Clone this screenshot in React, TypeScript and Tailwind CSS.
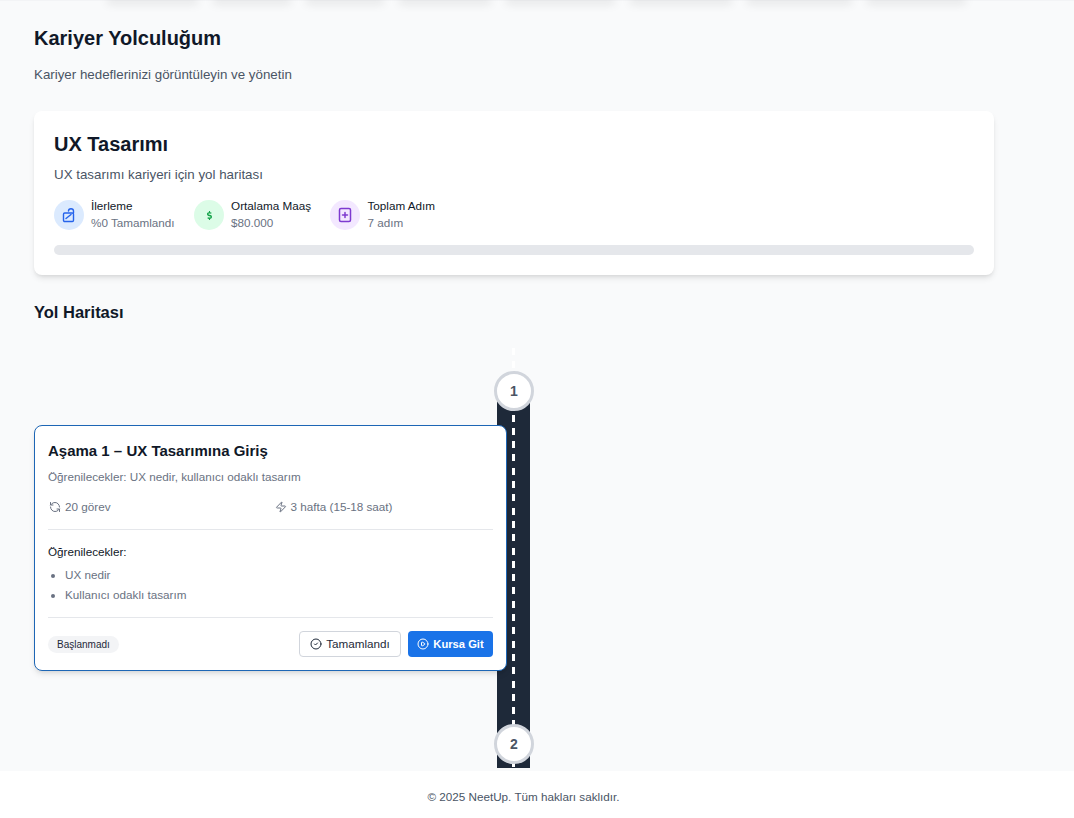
import { CircleCheck, CirclePlay, RefreshCcw, Zap } from "lucide-react";
import { FaDollarSign } from "react-icons/fa";

const navShadows = ["w-[85px]", "w-[72px]", "w-[72px]", "w-[86px]", "w-[103px]", "w-[96px]", "w-[99px]", "w-[93px]"];

function ProgressIcon() {
  return (
    <svg width="14" height="16" viewBox="0 0 14 16" fill="none" stroke="currentColor" strokeWidth="1.4" strokeLinecap="round" strokeLinejoin="round" className="text-[#2563eb]">
      <rect x="1.5" y="6" width="10" height="8.5" rx="1.2" />
      <path d="M4 11.5 L9 7.5" />
      <path d="M6.5 4 C6.5 1 11.5 1 11.5 4 L11.5 6" />
    </svg>
  );
}

function StepsIcon() {
  return (
    <svg width="14" height="16" viewBox="0 0 14 16" fill="none" stroke="currentColor" strokeWidth="1.5" strokeLinecap="round" strokeLinejoin="round" className="text-[#7e3ad0]">
      <rect x="1.5" y="1.5" width="11" height="13" rx="1.5" />
      <path d="M7 5.5 V10.5 M4.5 8 H9.5" />
    </svg>
  );
}

const stats = [
  { icon: <ProgressIcon />, bg: "bg-[#dbeafe]", label: "İlerleme", value: "%0 Tamamlandı" },
  { icon: <FaDollarSign size={9} className="text-[#16a34a]" />, bg: "bg-[#dcfce7]", label: "Ortalama Maaş", value: "$80.000" },
  { icon: <StepsIcon />, bg: "bg-[#f3e8ff]", label: "Toplam Adım", value: "7 adım" },
];

function RoadNode({ n }: { n: number }) {
  return (
    <div className="w-10 h-10 rounded-full bg-white border-[3px] border-gray-300 flex items-center justify-center text-sm font-bold text-gray-600">
      {n}
    </div>
  );
}

export default function App() {
  return (
    <div className="h-[818px] overflow-hidden bg-gray-50 flex flex-col font-['Liberation_Sans',Arial,sans-serif]">
      {/* NAV, scrolled out of view */}
      <div className="h-0 flex gap-[21px] pl-[110px] border-t border-gray-100">
        {navShadows.map((w, i) => (
          <div key={i} className={`${w} h-0 shadow-[0_0_10px_3px_rgba(0,0,0,0.1)]`} />
        ))}
      </div>

      <main className="flex-1 min-h-0 overflow-hidden px-[34px]">
        {/* HEADER */}
        <h1 className="mt-[23px] text-[20px] leading-[28px] font-bold text-gray-900">Kariyer Yolculuğum</h1>
        <p className="mt-[14px] text-[13.33px] leading-[18px] text-gray-600">Kariyer hedeflerinizi görüntüleyin ve yönetin</p>

        {/* CAREER CARD */}
        <section className="mt-[27px] w-[960px] h-[164px] bg-white rounded-lg shadow-md px-5 pt-[19px]">
          <h2 className="text-[20px] leading-[28px] font-bold text-gray-900">UX Tasarımı</h2>
          <p className="mt-[8px] text-[13.33px] leading-[18px] text-gray-600">UX tasarımı kariyeri için yol haritası</p>
          <div className="mt-[13px] flex gap-[19.5px]">
            {stats.map((s) => (
              <div key={s.label} className="flex items-center gap-[7px]">
                <div className={`w-[30px] h-[30px] rounded-full flex items-center justify-center ${s.bg}`}>{s.icon}</div>
                <div className="pb-[2px]">
                  <div className="text-[11.7px] leading-[17px] text-gray-900">{s.label}</div>
                  <div className="text-[11.7px] leading-[17px] text-gray-500">{s.value}</div>
                </div>
              </div>
            ))}
          </div>
          <div className="mt-[12px] h-[10px] rounded-full bg-gray-200" />
        </section>

        <h2 className="mt-[27px] text-[16.5px] leading-[20px] font-bold text-gray-900">Yol Haritası</h2>

        {/* ROADMAP */}
        <div className="relative mt-[29px] h-[417px]">
          <div className="absolute left-[463px] top-[43px] bottom-0 w-[33px] bg-gray-800" />
          <div className="absolute left-[478px] top-[-3px] bottom-0 w-[3px] bg-[repeating-linear-gradient(to_bottom,#ffffff_0,#ffffff_7px,transparent_7px,transparent_13.3px)]" />
          <div className="absolute left-[460px] top-[20px]">
            <RoadNode n={1} />
          </div>
          <div className="absolute left-[460px] top-[373px]">
            <RoadNode n={2} />
          </div>

          <article className="absolute left-0 top-[74px] w-[473px] h-[246px] bg-white border border-[#1d66b5] rounded-lg shadow-md px-[13px] pt-[14px]">
            <h3 className="text-[15px] leading-[22px] font-bold text-gray-900">Aşama 1 – UX Tasarımına Giriş</h3>
            <p className="mt-[6px] text-[11.7px] leading-[18px] text-gray-500">Öğrenilecekler: UX nedir, kullanıcı odaklı tasarım</p>
            <div className="mt-[12px] grid grid-cols-2 gap-1 text-[11.7px] leading-[18px] text-gray-500">
              <div className="flex items-center gap-1 pl-[1px]">
                <RefreshCcw size={12} />
                20 görev
              </div>
              <div className="flex items-center gap-1 pl-[2px]">
                <Zap size={12} />
                3 hafta (15-18 saat)
              </div>
            </div>
            <div className="mt-[13px] pt-[13px] border-t border-gray-200">
              <div className="text-[11.7px] leading-[18px] text-gray-900">Öğrenilecekler:</div>
              <ul className="mt-[4px] list-disc pl-[17px] text-[11.7px] leading-[20px] text-gray-500">
                <li>UX nedir</li>
                <li>Kullanıcı odaklı tasarım</li>
              </ul>
            </div>
            <div className="mt-[12px] pt-[13px] border-t border-gray-200 flex items-center justify-between">
              <span className="px-[9px] py-[1px] rounded-full bg-gray-100 text-[10px] leading-[15px] text-gray-800">Başlanmadı</span>
              <div className="flex gap-[7px]">
                <button className="h-[26px] w-[102px] rounded border border-gray-300 bg-white flex items-center justify-center gap-1 text-[11.7px] text-gray-800">
                  <CircleCheck size={12} />
                  Tamamlandı
                </button>
                <button className="h-[26px] w-[85px] rounded bg-[#1a73e8] flex items-center justify-center gap-1 text-[11.2px] font-bold text-white">
                  <CirclePlay size={12} />
                  Kursa Git
                </button>
              </div>
            </div>
          </article>
        </div>
      </main>

      {/* FOOTER */}
      <footer className="h-[47px] bg-white flex items-center justify-center pr-[27px] pt-[4px] text-[11.7px] text-gray-600">
        © 2025 NeetUp. Tüm hakları saklıdır.
      </footer>
    </div>
  );
}
